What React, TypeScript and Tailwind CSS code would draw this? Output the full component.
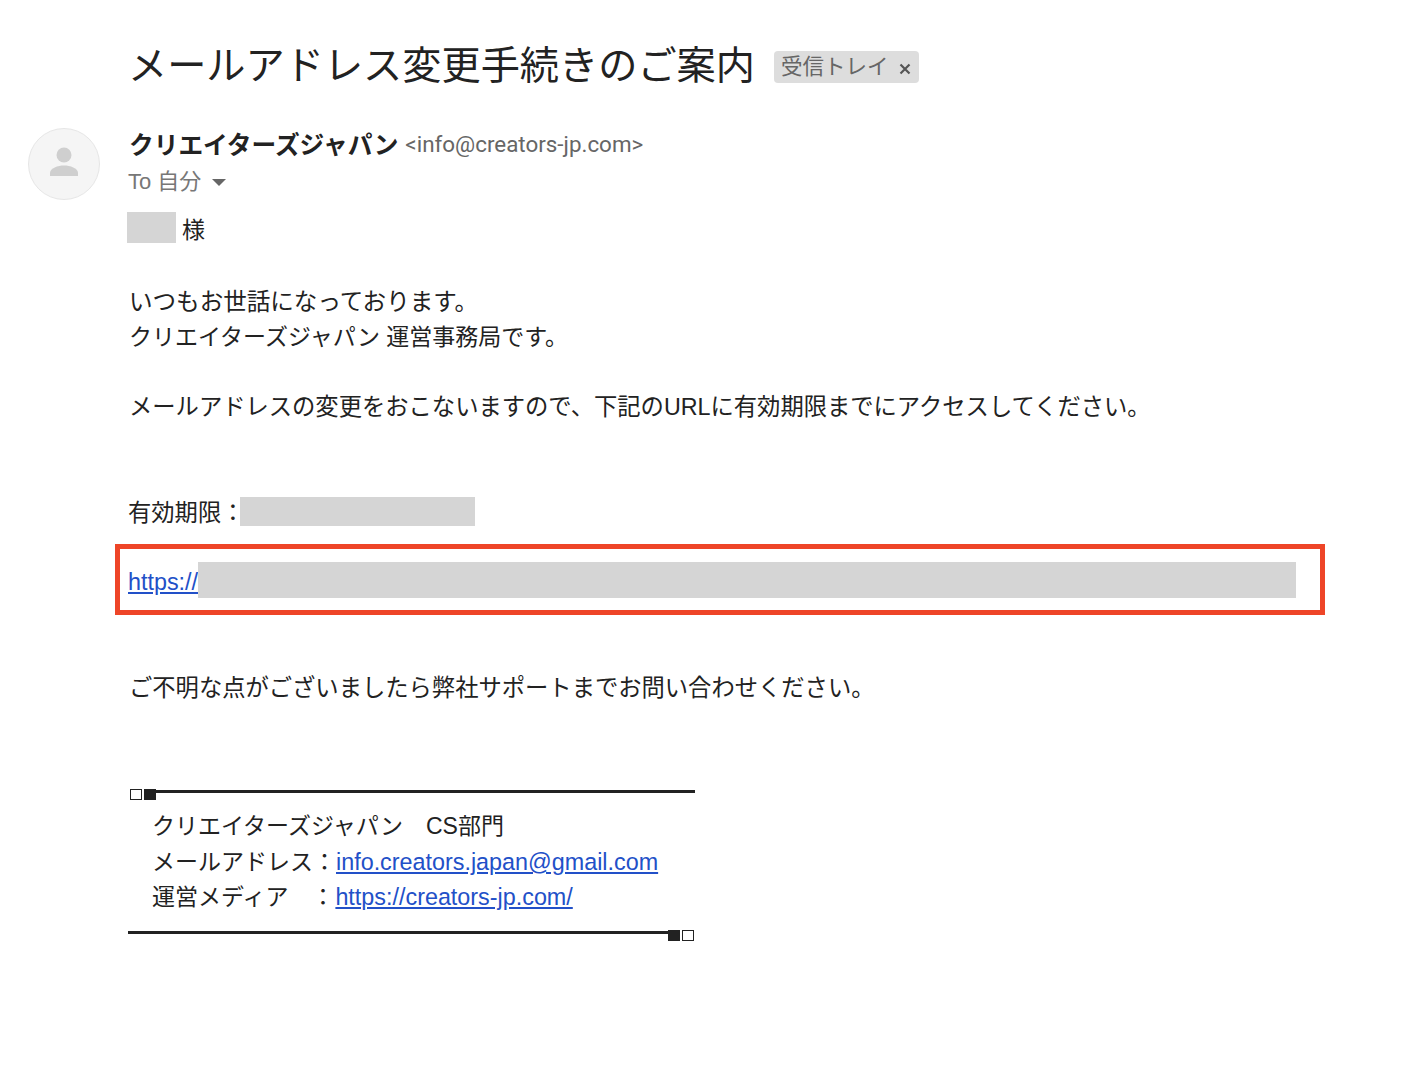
import React from 'react';

const font = { fontFamily: '"Liberation Sans", "Noto Sans CJK JP", sans-serif' };

function Avatar() {
  return (
    <div className="w-[72px] h-[72px] shrink-0 rounded-full bg-[#f5f5f5] border border-[#e6e6e6] flex items-center justify-center">
      <svg width="32" height="36" viewBox="0 0 32 36" fill="#cfcfcf">
        <circle cx="16" cy="9" r="7.5" />
        <path d="M2 27c0-5 8-7.5 14-7.5s14 2.500 14 7.500v3H2z" />
      </svg>
    </div>
  );
}

function BodyLine({ children, className = '' }: { children?: React.ReactNode; className?: string }) {
  return <div className={`h-[35px] leading-[35px] whitespace-pre pl-px pt-px ${className}`}>{children}</div>;
}

function Link({ children, className = '' }: { children: React.ReactNode; className?: string }) {
  return <a href="#" className={`text-[23.35px] text-[#2250c8] underline underline-offset-2 ${className}`}>{children}</a>;
}

export default function App() {
  return (
    <div className="w-[1420px] h-[1090px] bg-white text-[#222222] overflow-hidden" style={font}>
      {/* 件名 */}
      <div className="flex items-center h-[50px] mt-[40px] pl-[128px]">
        <h1 className="text-[39.2px] leading-[50px] mt-[2px] font-normal whitespace-nowrap">メールアドレス変更手続きのご案内</h1>
        <span className="ml-[19px] mt-[4px] h-[32px] w-[145px] rounded bg-[#dddddd] text-[#666666] text-[21.5px] flex items-center pl-[7px] whitespace-nowrap">
          受信トレイ
          <svg className="ml-[10px] mt-[4px]" width="12" height="12" viewBox="0 0 12 12" stroke="#555555" strokeWidth="2.200">
            <path d="M1.500 1.500l9 9M10.500 1.500l-9 9" />
          </svg>
        </span>
      </div>

      <div className="flex mt-[38px] pl-[28px]">
        <Avatar />
        <div className="ml-[28px] w-[1230px]">
          {/* 差出人 */}
          <div className="h-[34px] flex items-center pl-px whitespace-nowrap">
            <span className="text-[24.7px] font-bold mt-[2px]">クリエイターズジャパン</span>
            <span className="ml-[7px] text-[22.4px] text-[#666666] font-['Roboto']">&lt;info@creators-jp.com&gt;</span>
          </div>
          <div className="h-[38px] flex items-center text-[22px] text-[#777777] whitespace-nowrap">
            To 自分
            <span className="ml-[11px] mt-[2px] w-0 h-0 border-x-[7px] border-x-transparent border-t-[7px] border-t-[#666666]" />
          </div>

          {/* 本文 */}
          <div className="text-[23.3px]">
            <div className="h-[31px] mt-[12px] -ml-px flex items-center">
              <span className="w-[49px] h-[31px] bg-[#d5d5d5]" />
              <span className="ml-[6px] mt-[6px] text-[23px]">様</span>
            </div>
            <div className="mt-[41px]">
              <BodyLine className="text-[23.55px]">いつもお世話になっております。</BodyLine>
              <BodyLine className="text-[23px]">クリエイターズジャパン 運営事務局です。</BodyLine>
              <BodyLine />
              <BodyLine>メールアドレスの変更をおこないますので、下記のURLに有効期限までにアクセスしてください。</BodyLine>
              <BodyLine />
              <BodyLine />
            </div>
            <div className="h-[29px] mt-[3px] flex items-center">
              <span className="mt-[4px]">有効期限：</span>
              <span className="-ml-[4px] w-[235px] h-[29px] bg-[#d5d5d5]" />
            </div>

            {/* URL枠 */}
            <div className="-ml-[13px] mt-[18px] w-[1210px] h-[71px] border-[5px] border-[#ee4528] flex items-center pl-[9px]">
              <Link className="mt-[6px] -ml-px">https://</Link>
              <span className="w-[1098px] h-[36px] bg-[#d5d5d5]" />
            </div>

            <div className="mt-[55px]">
              <BodyLine>ご不明な点がございましたら弊社サポートまでお問い合わせください。</BodyLine>
            </div>

            {/* 署名 */}
            <div className="mt-[84px] w-[567px] text-[23px]">
              <div className="flex items-start h-[11px] pl-[2px]">
                <span className="w-[12px] h-[11px] border border-[#222222]" />
                <span className="ml-[2px] w-[12px] h-[11px] bg-[#222222]" />
                <span className="mt-px flex-1 h-[3px] bg-[#222222]" />
              </div>
              <div className="mt-[9px] pl-[24px]">
                <div className="h-[35px] leading-[35px] whitespace-pre">クリエイターズジャパン　CS部門</div>
                <div className="h-[36px] leading-[36px] whitespace-pre">メールアドレス：<Link>info.creators.japan@gmail.com</Link></div>
                <div className="h-[35px] leading-[35px] whitespace-pre">運営メディア　：<Link className="ml-px">https://creators-jp.com/</Link></div>
              </div>
              <div className="flex items-start h-[11px] mt-[15px]">
                <span className="mt-px flex-1 h-[3px] bg-[#222222]" />
                <span className="w-[12px] h-[11px] bg-[#222222]" />
                <span className="ml-[2px] mr-px w-[12px] h-[11px] border border-[#222222]" />
              </div>
            </div>
          </div>
        </div>
      </div>
    </div>
  );
}
